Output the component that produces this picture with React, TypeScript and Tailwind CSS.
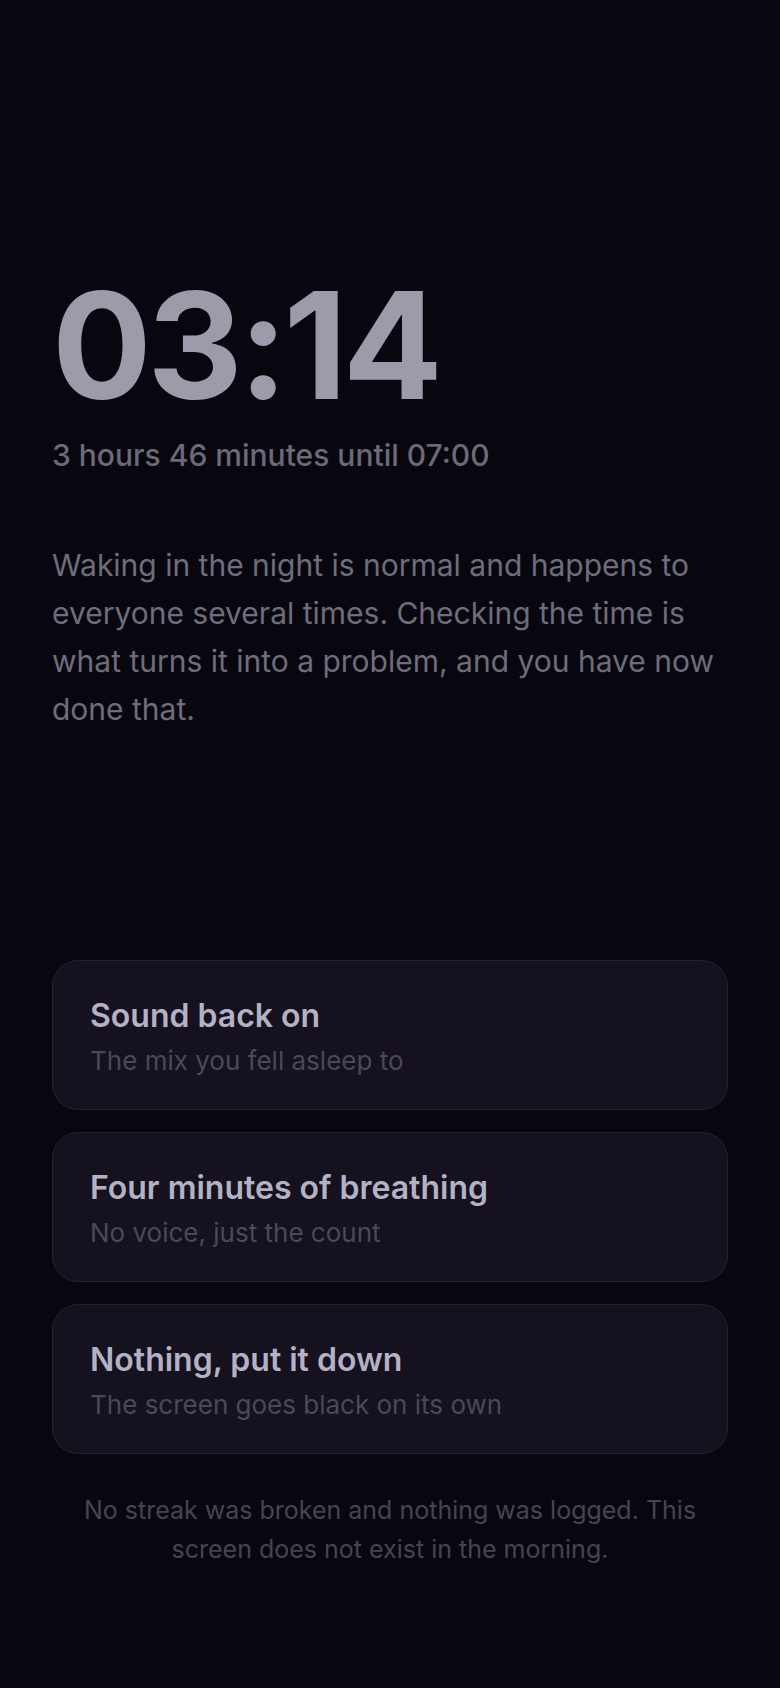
import React from "react";

const options = [
  { title: "Sound back on", sub: "The mix you fell asleep to" },
  { title: "Four minutes of breathing", sub: "No voice, just the count" },
  { title: "Nothing, put it down", sub: "The screen goes black on its own" },
];

export default function App() {
  return (
    <div
      className="min-h-screen w-full bg-[#08070f] px-[52px] pt-[272px] pb-[100px]"
      style={{ fontFamily: "Inter, 'Noto Sans', sans-serif" }}
    >
      <h1 className="text-[148px] leading-none font-bold tracking-[-0.03em] text-[#9d9ba9]">
        03:14
      </h1>
      <p className="mt-[17px] text-[30px] leading-[36px] font-medium text-[#6c6a78]">
        3 hours 46 minutes until 07:00
      </p>
      <p className="mt-[68px] text-[30px] leading-[48px] text-[#6f6d7c]">
        Waking in the night is normal and happens to everyone several times.
        Checking the time is what turns it into a problem, and you have now done
        that.
      </p>

      <div className="mt-[227px] flex flex-col gap-[22px]">
        {options.map((o) => (
          <button
            key={o.title}
            className="flex h-[150px] w-full flex-col items-start rounded-[26px] border border-[#25212f] bg-[#15111f] px-[37px] pt-[37px] text-left"
          >
            <span className="text-[32px] leading-[36px] font-semibold text-[#b4b1c4]">
              {o.title}
            </span>
            <span className="mt-[9px] text-[26px] leading-[36px] text-[#4b4859]">
              {o.sub}
            </span>
          </button>
        ))}
      </div>

      <p className="mt-[37px] text-center text-[25px] leading-[39px] text-[#474452]">
        No streak was broken and nothing was logged. This screen does not exist
        in the morning.
      </p>
    </div>
  );
}
